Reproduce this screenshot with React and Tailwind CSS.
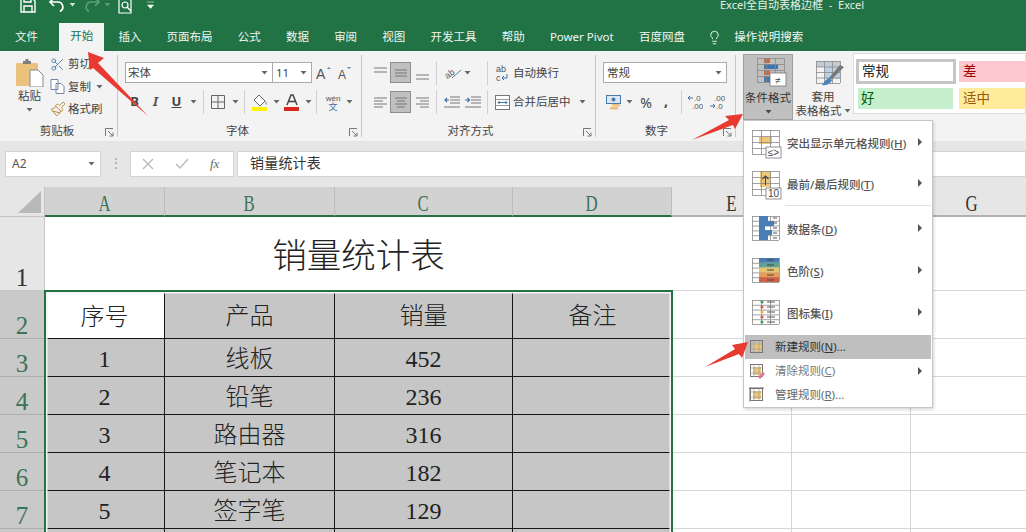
import React from "react";
import { Lightbulb, Scissors, Paintbrush } from "lucide-react";

const Caret = ({ c = "#666" }) => (
  <svg width="7" height="4" viewBox="0 0 7 4" className="shrink-0"><path d="M0.5 0h6L3.5 3.6z" fill={c} /></svg>
);
const Sep = ({ className = "" }) => <div className={`w-px h-[24px] bg-[#d0d0d0] shrink-0 ${className}`} />;
const Launcher = () => (
  <svg width="9" height="9" viewBox="0 0 9 9" className="absolute right-[3px] bottom-[0px]">
    <path d="M0.5 8V0.5H8M3 3l5 5M8 4.5V8H4.5" fill="none" stroke="#777" strokeWidth="1" />
  </svg>
);
const Lines = ({ lines, w = 16, h = 16 }) => (
  <svg width={w} height={h} viewBox={`0 0 ${w} ${h}`}>
    {lines.map(([a, b, y], i) => <path key={i} d={`M${a} ${y}H${b}`} stroke="#777" strokeWidth="1" />)}
  </svg>
);

function Grid({ x = 0, y = 0, w = 27, h = 24, cols = 3, rows = 4, s = "#8a8a8a" }) {
  const out = [];
  for (let i = 0; i <= cols; i++) out.push(<path key={"c" + i} d={`M${x + (w * i) / cols + 0.5} ${y}V${y + h}`} stroke={s} strokeWidth="0.8" />);
  for (let i = 0; i <= rows; i++) out.push(<path key={"r" + i} d={`M${x} ${y + (h * i) / rows + 0.5}H${x + w}`} stroke={s} strokeWidth="0.8" />);
  return <g>{out}</g>;
}
const Badge = ({ x, y, w, h, children }) => (
  <g>
    <rect x={x} y={y} width={w} height={h} fill="#fff" stroke="#777" strokeWidth="0.8" />
    <text x={x + w / 2} y={y + h - 2.5} textAnchor="middle" fontSize="10" fill="#444" fontFamily="Liberation Sans">{children}</text>
  </g>
);

const IconHighlight = () => (
  <svg width="30" height="30" viewBox="0 0 30 30">
    <rect x="7" y="7" width="13" height="7" fill="#ecc878" />
    <Grid />
    <Badge x={14} y={17} w={15} h={11}>≤&gt;</Badge>
  </svg>
);
const IconTop = () => (
  <svg width="30" height="30" viewBox="0 0 30 30">
    <rect x="8" y="0" width="11" height="16" fill="#ecc878" />
    <Grid />
    <path d="M13.5 14V5M10.5 8l3-3 3 3" stroke="#444" fill="none" strokeWidth="1.1" />
    <Badge x={14} y={17} w={15} h={11}>10</Badge>
  </svg>
);
const IconBars = () => (
  <svg width="30" height="30" viewBox="0 0 30 30">
    <Grid rows={5} />
    {[[9, 0], [15, 5], [6, 10], [13, 14], [9, 19]].map(([w, y], i) => <rect key={i} x="7" y={y} width={w} height="5" fill="#4a7db5" />)}
    {[2, 7, 12, 17, 22].map((y) => <path key={y} d={`M21 ${y}h4`} stroke="#555" />)}
  </svg>
);
const IconScale = () => (
  <svg width="30" height="30" viewBox="0 0 30 30">
    <Grid rows={5} />
    {["#3f76ad", "#5d9d8c", "#e5c36a", "#e59a4f", "#cf5a3c"].map((c, i) => <rect key={i} x="7" y={i * 4.8} width="20" height="4.8" fill={c} opacity="0.95" />)}
    {[2, 7, 12, 17, 22].map((y) => <path key={y} d={`M15 ${y}h7`} stroke="#444" />)}
  </svg>
);
const IconSets = () => (
  <svg width="30" height="30" viewBox="0 0 30 30">
    <Grid rows={5} />
    {[["#4a9c5a", 2], ["#d55", 7], ["#e8b83a", 12], ["#d55", 17], ["#4a9c5a", 22]].map(([c, y]) => (
      <g key={y}><circle cx="10" cy={y} r="1.6" fill={c} /><path d={`M15 ${y}h8`} stroke="#555" /></g>
    ))}
  </svg>
);
const IconSmall = ({ kind }) => (
  <svg width="16" height="16" viewBox="0 0 16 16">
    <rect x="4" y="4" width="8" height="8" fill="#ecc878" />
    <rect x="1.5" y="1.5" width="12" height="12" fill="none" stroke="#777" />
    <path d="M1.5 5h12M1.5 10h12M5 1.5v12M10 1.5v12" stroke="#999" strokeWidth="0.6" />
    {kind === "clear" && <path d="M9 14l5-5 2 2-5 5z" fill="#e0719a" />}
    {kind === "manage" && <path d="M0 1h15M0 1v14" stroke="#666" />}
  </svg>
);

const MenuRow = ({ icon, children, arrow = true, className = "" }) => (
  <div className={`flex items-center h-[42px] pl-[7px] pr-[9px] ${className}`}>
    <div className="w-[30px] h-[30px] shrink-0 mt-[2px]">{icon}</div>
    <span className="ml-[5px] font-medium">{children}</span>
    {arrow && <span className="ml-auto mb-[5px] w-0 h-0 border-y-[4px] border-y-transparent border-l-[4px] border-l-[#555]" />}
  </div>
);
const MenuSmall = ({ kind, children, arrow, className = "" }) => (
  <div className={`flex items-center h-[24px] pl-[4px] pr-[9px] ${className}`}>
    <div className="w-[16px] h-[16px] shrink-0"><IconSmall kind={kind} /></div>
    <span className="ml-[10px]">{children}</span>
    {arrow && <span className="ml-auto w-0 h-0 border-y-[4px] border-y-transparent border-l-[4px] border-l-[#555]" />}
  </div>
);

const Tabs = ["插入", "页面布局", "公式", "数据", "审阅", "视图", "开发工具", "帮助", "Power Pivot", "百度网盘"];

const Group = ({ className, label, labelClass = "", children, launcher = true }) => (
  <div className={`relative h-[82px] shrink-0 border-r border-[#c8c8c8] ${className}`}>
    {children}
    <div className={`absolute left-0 right-0 -bottom-[1px] h-[14px] leading-[14px] text-center ${labelClass}`}>{label}</div>
    {launcher && <Launcher />}
  </div>
);
const Cell = ({ className = "", children }) => <div className={`flex items-center justify-center shrink-0 h-full ${className}`}>{children}</div>;

const COLS = ["A", "B", "C", "D"];
const BODY = [
  ["1", "线板", "452"],
  ["2", "铅笔", "236"],
  ["3", "路由器", "316"],
  ["4", "笔记本", "182"],
  ["5", "签字笔", "129"],
  ["", "", ""],
];
const gray = "bg-[#c6c6c6] border-r border-b border-[#161616] flex items-center justify-center pt-[3px] text-[#222] text-[24px] font-light";
const blank = "bg-white border-r border-b border-[#d6d6d6]";
const rowHead = "flex items-end justify-center text-[25px] leading-none text-[#3b7358] bg-[#c9c9c9] border-b border-r border-[#aeaeae]";

export default function App() {
  return (
    <div className="relative w-[1026px] h-[532px] overflow-hidden bg-[#e6e6e6] text-[11.5px] text-[#444] [font-family:'Noto_Sans','Noto_Sans_CJK_SC',sans-serif]">
      {/* Title + tabs */}
      <div className="h-[51px] bg-[#217346] text-[#f1f6f3]">
        <div className="relative h-[23px] flex items-start overflow-hidden">
          <div className="flex items-center h-[16px] -mt-[3px] pl-[20px]">
            <svg width="16" height="16" viewBox="0 0 16 16"><path d="M1 1h11l3 3v11H1zM4 15V9h8v6M4 1v4h7V1" fill="none" stroke="#fff" strokeWidth="1.4" /></svg>
            <svg className="ml-[12px]" width="18" height="16" viewBox="0 0 18 16"><path d="M6 1L2 5l4 4M2 5h8a5 5 0 0 1 2 9.5" fill="none" stroke="#fff" strokeWidth="1.7" /></svg>
            <div className="ml-[3px]"><Caret c="#cfe0d7" /></div>
            <svg className="ml-[7px]" width="18" height="16" viewBox="0 0 18 16"><path d="M12 1l4 4-4 4M16 5H8a5 5 0 0 0-2 9.5" fill="none" stroke="#5f9a7c" strokeWidth="1.7" /></svg>
            <div className="ml-[3px]"><Caret c="#5f9a7c" /></div>
            <svg className="ml-[7px]" width="16" height="18" viewBox="0 0 16 18"><path d="M1 1h9l3 3v13H1z" fill="none" stroke="#fff" strokeWidth="1.2" /><circle cx="7" cy="9" r="3" fill="none" stroke="#fff" strokeWidth="1.2" /><path d="M9 11l4 4" stroke="#fff" strokeWidth="1.5" /></svg>
            <svg className="ml-[13px]" width="7" height="8" viewBox="0 0 7 8"><path d="M0 1h7M0.5 4h6L3.5 7.5z" fill="#fff" stroke="#fff" strokeWidth="0.5" /></svg>
          </div>
          <div className="absolute left-[720px] top-[-3px] text-[11px] leading-[16px] whitespace-pre text-[#e5efea]">Excel全自动表格边框  -  Excel</div>
        </div>
        <div className="flex items-center h-[28px] pl-[15px] gap-[25.2px] whitespace-nowrap">
          <span>文件</span>
          <span className="h-[28px] leading-[26px] -mr-[11px] -ml-[4px] px-[11px] bg-[#f3f3f3] text-[#217346]">开始</span>
          {Tabs.map((t) => <span key={t}>{t}</span>)}
          <Lightbulb size={15} strokeWidth={1.5} className="-ml-[3px] -mr-[13px] shrink-0" />
          <span>操作说明搜索</span>
        </div>
      </div>

      {/* Ribbon */}
      <div className="flex h-[90px] pt-[4px] bg-[#f3f3f3] whitespace-nowrap">
        <Group className="w-[118px] flex" label="剪贴板" labelClass="pr-[3px]">
          <div className="w-[50px] flex flex-col items-center pl-[9px]">
            <svg className="mt-[4px]" width="28" height="28" viewBox="0 0 28 28">
              <rect x="0" y="4" width="22" height="23" rx="1" fill="#eac27e" />
              <path d="M7 5V2h2.5V0h3v2H15v3z" fill="#7d7d7d" />
              <path d="M14 11h8l5 5v12H14z" fill="#fff" stroke="#888" />
            </svg>
            <span className="mt-[2px] h-[14px] leading-[14px]">粘贴</span>
            <div className="mt-[5px]"><Caret /></div>
          </div>
          <div className="-mt-[2px]">
            <div className="flex items-center h-[22px]"><Scissors size={15} strokeWidth={1.4} className="text-[#4b79ad] mr-[3px]" /><span>剪切</span></div>
            <div className="flex items-center h-[23px]">
              <svg className="mr-[2px]" width="16" height="15" viewBox="0 0 16 15"><path d="M1 .5h7v10H1zM6 4.5h5l3 3v7H6z" fill="#fff" stroke="#6f88a6" /></svg>
              <span>复制</span><div className="ml-[5px]"><Caret /></div>
            </div>
            <div className="flex items-center h-[22px]"><Paintbrush size={16} strokeWidth={1.5} className="text-[#b98c3e] mr-[2px]" /><span>格式刷</span></div>
          </div>
        </Group>

        <Group className="w-[244px]" label="字体" labelClass="pr-[4px]">
          <div className="flex items-center h-[21px] mt-[7px] ml-[7px]">
            <div className="w-[148px] h-[21px] bg-white border border-[#ababab] flex items-center pl-[2px] pr-[4px] justify-between"><span>宋体</span><Caret /></div>
            <div className="w-[39px] h-[21px] bg-white border border-[#ababab] border-l-0 flex items-center pl-[3px] pr-[4px] justify-between"><span>11</span><Caret /></div>
            <Cell className="w-[22px] ml-[1px]"><svg width="16" height="14" viewBox="0 0 16 14"><text x="0" y="13" fontSize="14" fill="#555" fontFamily="Liberation Sans">A</text><path d="M11 3l2-2 2 2z" fill="#5b86b5" /></svg></Cell>
            <Cell className="w-[21px]"><svg width="15" height="14" viewBox="0 0 15 14"><text x="0" y="13" fontSize="12" fill="#555" fontFamily="Liberation Sans">A</text><path d="M9 1l2 2 2-2z" fill="#5b86b5" /></svg></Cell>
          </div>
          <div className="flex items-center h-[22px] mt-[8px] ml-[6px] text-[13px]">
            <Cell className="w-[21px] font-bold">B</Cell>
            <Cell className="w-[21px] italic font-bold text-[#555]">I</Cell>
            <Cell className="w-[21px] underline font-bold">U</Cell>
            <Cell className="w-[12px]"><Caret /></Cell>
            <Sep className="ml-[4px]" />
            <Cell className="w-[22px] ml-[3px]"><svg width="14" height="14" viewBox="0 0 14 14"><path d="M.5.5h13v13H.5zM7 .5v13M.5 7h13" fill="none" stroke="#666" /></svg></Cell>
            <Cell className="w-[12px]"><Caret /></Cell>
            <Sep className="ml-[3px]" />
            <Cell className="w-[22px] ml-[4px]"><svg width="16" height="17" viewBox="0 0 16 17"><path d="M7 1l6 6-5 5-6-6z" fill="#fff" stroke="#666" /><path d="M13 6l2 4-1 1z" fill="#5b86b5" /><rect x="0" y="13" width="15" height="4" fill="#fff200" /></svg></Cell>
            <Cell className="w-[10px]"><Caret /></Cell>
            <Cell className="w-[22px]"><svg width="16" height="17" viewBox="0 0 16 17"><path d="M3 11L7 1h2l4 10M5 7.5h6" fill="none" stroke="#444" strokeWidth="1.5" /><rect x="0" y="13" width="15" height="4" fill="#d9261c" /></svg></Cell>
            <Cell className="w-[10px]"><Caret /></Cell>
            <Sep className="ml-[3px]" />
            <Cell className="w-[22px] ml-[5px]"><svg width="18" height="18" viewBox="0 0 18 18"><text x="9" y="8" textAnchor="middle" fontSize="8" fill="#555" fontFamily="Liberation Sans">wén</text><text x="9" y="17" textAnchor="middle" fontSize="9" fill="#3f70a8" fontFamily="Noto Sans CJK SC">文</text></svg></Cell>
            <Cell className="w-[10px]"><Caret /></Cell>
          </div>
        </Group>

        <Group className="w-[234px]" label="对齐方式" labelClass="pr-[16px]">
          <div className="flex items-center h-[21px] mt-[7px] ml-[8px]">
            <Cell className="w-[20px]"><Lines lines={[[2, 15, 3], [2, 15, 7]]} /></Cell>
            <Cell className="w-[21px] bg-[#c0c0c0] border border-[#8e8e8e]"><Lines lines={[[2, 14, 5], [2, 14, 8], [2, 14, 11]]} /></Cell>
            <Cell className="w-[21px]"><Lines lines={[[2, 15, 10], [2, 15, 14]]} /></Cell>
            <Sep className="ml-[4px]" />
            <Cell className="w-[20px] ml-[6px]"><svg width="18" height="16" viewBox="0 0 18 16"><text x="0" y="12" fontSize="9" fill="#555" transform="rotate(-35 5 8)" fontFamily="Liberation Sans">ab</text><path d="M8 13l9-8" stroke="#777" /></svg></Cell>
            <Cell className="w-[8px]"><Caret /></Cell>
            <Sep className="ml-[16px]" />
            <Cell className="w-[16px] ml-[6px]"><svg width="14" height="18" viewBox="0 0 14 18"><text x="1" y="8" fontSize="9" fill="#555" fontFamily="Liberation Sans">ab</text><text x="1" y="17" fontSize="9" fill="#555" fontFamily="Liberation Sans">c</text><path d="M12 10v4H7M9 12l-2 2 2 2" fill="none" stroke="#3f70a8" /></svg></Cell>
            <span className="ml-[3px]">自动换行</span>
          </div>
          <div className="flex items-center h-[22px] mt-[8px] ml-[8px]">
            <Cell className="w-[20px]"><Lines lines={[[2, 15, 4], [2, 11, 7], [2, 15, 10], [2, 11, 13]]} /></Cell>
            <Cell className="w-[21px] bg-[#c0c0c0] border border-[#8e8e8e]"><Lines lines={[[2, 14, 4], [4, 12, 7], [2, 14, 10], [4, 12, 13]]} /></Cell>
            <Cell className="w-[21px]"><Lines lines={[[2, 15, 4], [6, 15, 7], [2, 15, 10], [6, 15, 13]]} /></Cell>
            <Sep className="ml-[4px]" />
            <Cell className="w-[17px] ml-[6px]"><svg width="16" height="14" viewBox="0 0 16 14"><path d="M6 2h10M6 5h10M6 8h10M0 12h16" stroke="#777" /><path d="M5 5H1M3 3L1 5l2 2" stroke="#3f70a8" fill="none" strokeWidth="1.2" /></svg></Cell>
            <Cell className="w-[17px] ml-[4px]"><svg width="16" height="14" viewBox="0 0 16 14"><path d="M6 2h10M6 5h10M6 8h10M0 12h16" stroke="#777" /><path d="M0 5h4M2.5 3L4.5 5l-2 2" stroke="#3f70a8" fill="none" strokeWidth="1.2" /></svg></Cell>
            <Sep className="ml-[6px]" />
            <Cell className="w-[16px] ml-[6px]"><svg width="15" height="15" viewBox="0 0 15 15"><rect x=".5" y=".5" width="14" height="14" fill="#fff" stroke="#777" /><path d="M.5 4.5h14M.5 10.5h14" stroke="#999" /><path d="M3 7.5h9M4.5 6L3 7.5 4.5 9M10.5 6L12 7.5 10.5 9" stroke="#3f70a8" fill="none" /></svg></Cell>
            <span className="ml-[3px]">合并后居中</span>
            <div className="ml-[8px]"><Caret /></div>
          </div>
        </Group>

        <Group className="w-[140px]" label="数字" labelClass="pr-[18px]">
          <div className="w-[124px] h-[21px] mt-[7px] ml-[7px] bg-white border border-[#ababab] flex items-center pl-[3px] pr-[4px] justify-between"><span>常规</span><Caret /></div>
          <div className="flex items-center h-[22px] mt-[8px] ml-[10px]">
            <Cell className="w-[16px]"><svg width="16" height="15" viewBox="0 0 16 15"><rect x=".5" y=".5" width="14" height="8" fill="#dce7f3" stroke="#4b79ad" /><circle cx="7.5" cy="4.5" r="2" fill="#4b79ad" /><rect x="6" y="9" width="8" height="2.5" fill="#eac27e" /><rect x="4" y="12" width="8" height="2.5" fill="#eac27e" /></svg></Cell>
            <Cell className="w-[14px]"><Caret /></Cell>
            <Cell className="w-[20px] text-[14px]">%</Cell>
            <Cell className="w-[20px] text-[14px] font-bold pb-[3px]">,</Cell>
            <Sep className="ml-[5px]" />
            <Cell className="w-[16px] ml-[5px]"><svg width="16" height="16" viewBox="0 0 16 16"><path d="M6 4H1M3 2L1 4l2 2" stroke="#3f70a8" fill="none" /><text x="7" y="7" fontSize="8" fill="#555" fontFamily="Liberation Sans">.0</text><text x="5" y="15" fontSize="8" fill="#555" fontFamily="Liberation Sans">.00</text></svg></Cell>
            <Cell className="w-[16px] ml-[6px]"><svg width="16" height="16" viewBox="0 0 16 16"><text x="5" y="7" fontSize="8" fill="#555" fontFamily="Liberation Sans">.00</text><path d="M1 12h5M4 10l2 2-2 2" stroke="#3f70a8" fill="none" /><text x="7" y="15" fontSize="8" fill="#555" fontFamily="Liberation Sans">.0</text></svg></Cell>
          </div>
        </Group>

        <div className="h-[82px] flex-1 flex">
          <div className="ml-[7px] -mt-[1px] w-[50px] h-[66px] bg-[#c0c0c0] border border-[#a0a0a0] flex flex-col items-center shrink-0">
            <svg className="mt-[3px] ml-[8px]" width="30" height="30" viewBox="0 0 30 30">
              <rect x="7" y="0" width="6" height="5" fill="#d9663c" />
              <rect x="7" y="6" width="14" height="5" fill="#3f76ad" />
              <rect x="7" y="12" width="6" height="5" fill="#d9663c" />
              <rect x="7" y="18" width="6" height="6" fill="#3f76ad" />
              <Grid />
              <Badge x={13} y={15} w={16} h={13}>≠</Badge>
            </svg>
            <span className="h-[14px] leading-[14px] mt-[3px] text-[#333]">条件格式</span>
            <div className="mt-[5px]"><Caret c="#444" /></div>
          </div>
          <div className="w-[60px] flex flex-col items-center shrink-0">
            <svg className="mt-[6px] ml-[16px]" width="30" height="28" viewBox="0 0 30 28">
              <rect x="0" y="0" width="24" height="6" fill="#c4cbd3" />
              <rect x="8" y="6" width="16" height="12" fill="#bcd0e6" />
              <Grid w={24} h={22} cols={3} rows={4} />
              <path d="M28 6L16 18l-3-1 11-13z" fill="#777" />
              <path d="M14 17c-3 0-5 3-8 7 5 1 9-2 10-5z" fill="#4b83b9" />
            </svg>
            <span className="h-[14px] leading-[14px] mt-[1px]">套用</span>
            <div className="flex items-center h-[14px]"><span>表格格式</span><div className="ml-[2px]"><Caret /></div></div>
          </div>
          <div className="flex-1 -mt-[2px] h-[61px] bg-white border border-[#dcdcdc] pt-[5px] pl-[1px] text-[13.5px]">
            <div className="flex h-[25px]">
              <div className="ml-[1px] w-[100px] h-[25px] bg-white border-[3px] border-[#c6c6c6] flex items-center pl-[3px] text-[#222]">常规</div>
              <div className="ml-[3px] mt-[2px] flex-1 h-[21px] bg-[#ffc7ce] text-[#9c0006] pl-[4px] leading-[21px]">差</div>
            </div>
            <div className="flex h-[21px] mt-[4px]">
              <div className="ml-[3px] w-[95px] bg-[#c6efce] text-[#006100] pl-[3px] leading-[21px]">好</div>
              <div className="ml-[6px] flex-1 bg-[#ffeb9c] text-[#9c5700] pl-[4px] leading-[21px]">适中</div>
            </div>
          </div>
        </div>
      </div>

      {/* Formula bar */}
      <div className="h-[46px] pt-[10px] flex text-[12px]">
        <div className="ml-[5px] w-[96px] h-[26px] bg-white border border-[#d4d4d4] flex items-center justify-between pl-[6px] pr-[5px]"><span className="text-[#555]">A2</span><Caret /></div>
        <div className="w-[29px] h-[26px] flex items-center justify-center pb-[2px] text-[#999] text-[12px] leading-none">⋮</div>
        <div className="w-[104px] h-[26px] bg-white border border-[#d4d4d4] flex items-center pl-[11px] text-[#bbb]">
          <svg width="12" height="12" viewBox="0 0 12 12"><path d="M1 1l10 10M11 1L1 11" stroke="#bdbdbd" strokeWidth="1.5" /></svg>
          <svg className="ml-[21px]" width="14" height="12" viewBox="0 0 14 12"><path d="M1 6l4 4 8-9" fill="none" stroke="#bdbdbd" strokeWidth="1.5" /></svg>
          <span className="ml-[21px] italic text-[13px] text-[#666] [font-family:'Liberation_Serif',serif]">fx</span>
        </div>
        <div className="ml-[3px] flex-1 h-[26px] bg-white border border-[#d4d4d4] flex items-center pl-[12px] pb-[3px] text-[14px] text-[#333] tracking-[0.2px]">销量统计表</div>
      </div>

      {/* Sheet */}
      <div className="relative h-[345px] overflow-hidden grid grid-cols-[45px_120px_170px_178px_159px_120px_119px_122px] grid-rows-[30px_74px_48px_38px_38px_38px_38px_38px_38px] bg-white [font-family:'Liberation_Serif','Noto_Sans_CJK_SC',serif]">
        <div className="bg-[#e6e6e6] border-r border-b border-[#c4c4c4] flex items-end justify-end pr-[3px] pb-[3px]">
          <div className="w-0 h-0 border-l-[23px] border-l-transparent border-b-[22px] border-b-[#b9b9b9]" />
        </div>
        {COLS.map((c) => (
          <div key={c} className="bg-[#d2d2d2] border-r border-[#bcbcbc] border-b-2 border-b-[#217346] flex items-center justify-center pt-[4px] text-[24px] text-[#3b7358]">
            <span className="inline-block scale-x-[0.7]">{c}</span>
          </div>
        ))}
        {["E", "F", "G"].map((c) => (
          <div key={c} className="bg-[#e6e6e6] border-r border-[#d0d0d0] border-b-2 border-b-[#b0b0b0] flex items-center justify-center pt-[4px] text-[24px] text-[#333]">
            <span className="inline-block scale-x-[0.7]">{c}</span>
          </div>
        ))}

        <div className="flex items-end justify-center text-[25px] leading-none text-[#333] bg-[#e6e6e6] border-r border-b border-[#c8c8c8]">1</div>
        <div className="col-span-4 bg-white flex items-center justify-center pt-[6px] text-[34.5px] font-light text-[#222]">销量统计表</div>
        <div className={blank} /><div className={blank} /><div className={blank} />

        <div className={rowHead}>2</div>
        <div className="bg-white border-r border-b border-[#161616] flex items-center justify-center pt-[4px] text-[24px] font-light text-[#222]">序号</div>
        {["产品", "销量"].map((t) => <div key={t} className={gray}>{t}</div>)}
        <div className={`${gray} border-r-0`}>备注</div>
        <div className={blank} /><div className={blank} /><div className={blank} />

        {BODY.map((r, i) => (
          <React.Fragment key={i}>
            <div className={rowHead}>{i < 5 ? i + 3 : ""}</div>
            {r.map((t, j) => <div key={j} className={gray}>{t}</div>)}
            <div className={`${gray} border-r-0`} />
            <div className={blank} /><div className={blank} /><div className={blank} />
          </React.Fragment>
        ))}

        <div className="absolute left-[44px] top-[103px] w-[629px] h-[260px] border-2 border-[#217346] shadow-[inset_0_0_0_1.5px_#f4f4f4] pointer-events-none" />
      </div>

      {/* Conditional formatting menu */}
      <div className="absolute left-[743px] top-[120px] w-[190px] h-[288px] bg-white border border-[#c6c6c6] shadow-[1px_2px_3px_rgba(0,0,0,0.15)] px-[1px] pt-[2px] text-[#555] whitespace-nowrap">
        <MenuRow icon={<IconHighlight />}>突出显示单元格规则(<u>H</u>)</MenuRow>
        <MenuRow icon={<IconTop />} className="!h-[40px]">最前/最后规则(<u>T</u>)</MenuRow>
        <div className="ml-[40px] h-px bg-[#e2e2e2]" />
        <MenuRow icon={<IconBars />} className="mt-[3px]">数据条(<u>D</u>)</MenuRow>
        <MenuRow icon={<IconScale />}>色阶(<u>S</u>)</MenuRow>
        <MenuRow icon={<IconSets />}>图标集(<u>I</u>)</MenuRow>
        <MenuSmall kind="new" className="bg-[#bfbfbf] text-[#333]">新建规则(<u>N</u>)...</MenuSmall>
        <MenuSmall kind="clear" arrow className="text-[#777]">清除规则(<u>C</u>)</MenuSmall>
        <MenuSmall kind="manage" className="text-[#666]">管理规则(<u>R</u>)...</MenuSmall>
      </div>

      {/* Red annotation arrows */}
      <svg className="absolute left-0 top-0 pointer-events-none" width="1026" height="532" viewBox="0 0 1026 532">
        <polygon points="88,52 104,58 98,63 148,116 93,68 90,70" fill="#e83a30" />
        <polygon points="743,114 725,116 729,120 692,140 733,125 735,129" fill="#e83a30" />
        <polygon points="748,342 732,345 735,349 705,367 739,354 742,358" fill="#e83a30" />
      </svg>
    </div>
  );
}
